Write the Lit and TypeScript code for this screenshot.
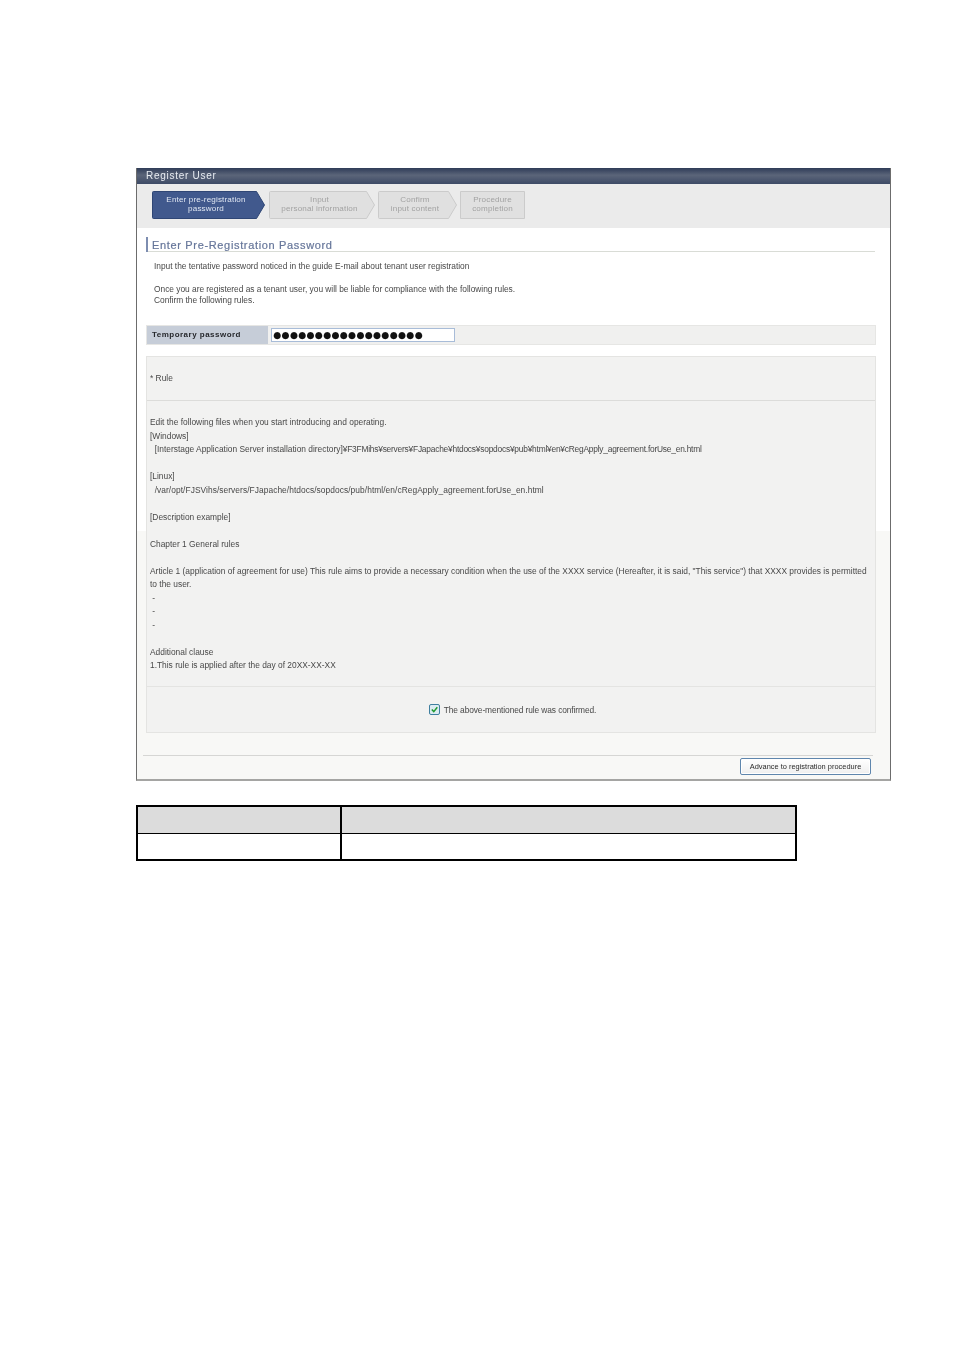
import { LitElement, html, css, svg } from "lit";
import { customElement } from "lit/decorators.js";

const STEPS = [
  { w: 113, a: 8, active: true, l: ["Enter pre-registration", "password"] },
  { w: 106, a: 8, active: false, l: ["Input", "personal information"] },
  { w: 79, a: 8, active: false, l: ["Confirm", "input content"] },
  { w: 65, a: 0, active: false, l: ["Procedure", "completion"] },
];

const WIN_PATH = "¥F3FMihs¥servers¥FJapache¥htdocs¥sopdocs¥pub¥html¥en¥cRegApply_agreement.forUse_en.html";
const LIN_PATH = "/var/opt/FJSVihs/servers/FJapache/htdocs/sopdocs/pub/html/en/cRegApply_agreement.forUse_en.html";

const RULES_A = [
  "Edit the following files when you start introducing and operating.",
  "[Windows]",
];
const RULES_B = [
  "",
  "Chapter 1 General rules",
  "",
  "Article 1 (application of agreement for use) This rule aims to provide a necessary condition when the use of the XXXX service (Hereafter, it is said, \"This service\") that XXXX provides is permitted",
  "to the user.",
  "\u00a0-",
  "\u00a0-",
  "\u00a0-",
  "",
  "Additional clause",
  "1.This rule is applied after the day of 20XX-XX-XX",
];

@customElement("app-root")
export class AppRoot extends LitElement {
  static styles = css`
    :host { display: block; width: 954px; height: 1350px; background: #fff; font-family: "Liberation Sans", Arial, sans-serif; overflow: hidden; }
    .page { padding: 168px 0 0 136px; display: flex; flex-direction: column; align-items: flex-start; }
    .frame { width: 755px; height: 613px; box-sizing: border-box; border: 1px solid #6c6c6c; border-top: 0; border-bottom: 2px solid #a5a5a3;
      background: linear-gradient(#fff 0 363px, #f8f8f6 363px); display: flex; flex-direction: column; filter: blur(0.35px); color: #484848; font-size: 8.4px; }
    .title { height: 16px; background: linear-gradient(#2f3c58, #5b6579 45%, #3d4a66); color: #e8ecf2; font-size: 10px; letter-spacing: .72px; padding-left: 9px; line-height: 16px; }
    .band { height: 44px; background: #ebebeb; box-sizing: border-box; padding: 7px 0 0 15px; display: flex; gap: 3px; }
    .step { display: grid; height: 28px; text-align: center; color: #a2a2a2; line-height: 9px; font-size: 8.1px; letter-spacing: .15px; }
    .step > * { grid-area: 1 / 1; }
    .step.on { color: #dfe6f2; margin-right: 1px; }
    .step .txt { padding-top: 4px; padding-right: 5px; white-space: nowrap; }
    .step.last .txt { padding-right: 0; }
    .heading { margin: 9px 0 0 9px; height: 15px; border-left: 2px solid #7d8db0; box-sizing: border-box; }
    .heading div { padding-left: 4px; height: 14px; width: 723px; border-bottom: 1px solid #d9dcd6; color: #66769a; font-size: 11px; letter-spacing: .66px; line-height: 16px; white-space: nowrap; -webkit-text-stroke: .2px #66769a; }
    .intro { margin: 9px 0 0 17px; line-height: 11.4px; letter-spacing: -.02px; }
    .intro p { margin: 0; height: 11.4px; white-space: nowrap; }
    .pw { margin: 18.5px 0 0 9px; width: 730px; height: 20px; display: flex; background: #f0f0ef; border: 1px solid #e6e6e4; box-sizing: border-box; }
    .pw .lab { width: 121px; background: #c6cdd8; color: #26282c; font-weight: 700; font-size: 8px; letter-spacing: .48px; line-height: 18px; padding-left: 5px; box-sizing: border-box; white-space: nowrap; }
    .pw .in { margin: 2px 0 0 3px; width: 184px; height: 14px; box-sizing: border-box; background: #fff; border: 1px solid #a8bcd8; font-family: "DejaVu Sans", sans-serif; font-size: 9.2px; letter-spacing: .3px; line-height: 11px; color: #111; padding-left: 1px; overflow: hidden; white-space: nowrap; }
    .panel { margin: 10.5px 0 0 9px; width: 730px; box-sizing: border-box; background: #f2f2f1; border: 1px solid #e4e4e2; }
    .rhead { height: 44px; padding: 16.5px 0 0 3px; box-sizing: border-box; border-bottom: 1px solid #dcdcda; line-height: 11px; }
    .rbody { height: 286px; box-sizing: border-box; padding: 15.5px 0 0 3px; border-bottom: 1px solid #e4e4e2; }
    .rbody p { margin: 0; height: 13.5px; line-height: 13.5px; white-space: nowrap; }
    .win { letter-spacing: -.22px; }
    .lin { letter-spacing: .06px; }
    .agree { height: 45px; display: flex; justify-content: center; align-items: center; gap: 4px; padding: 1.5px 0 0 3px; box-sizing: border-box; }
    .agree span { letter-spacing: -.1px; }
    .agree svg { display: block; }
    .foot { margin: 22.5px 0 0 6px; width: 730px; height: 1px; background: #d6d6d4; }
    .btnrow { display: flex; justify-content: flex-end; width: 734px; padding-top: 2px; }
    .btn { width: 131px; height: 17px; box-sizing: border-box; border: 1px solid #5f86ad; border-radius: 2px; background: linear-gradient(#fff, #efefef); color: #2a2a2a; font-size: 7.4px; letter-spacing: .02px; text-align: center; line-height: 15px; white-space: nowrap; box-shadow: inset 0 0 0 1px #fff; }
    .tbl { margin-top: 24px; width: 661px; height: 56px; box-sizing: border-box; border: 2px solid #000; display: grid; grid-template-columns: 202px 2px 1fr; grid-template-rows: 26px 1px 1fr; background: #000; }
    .tbl .h { background: #dcdcdc; }
    .tbl .c { background: #fff; }
  `;

  private step(s: (typeof STEPS)[number]) {
    const r = s.w - s.a - 0.5;
    const p = s.a
      ? `M.5 1.5 Q.5 .5 1.5 .5 H${r} L${s.w - 0.5} 14 L${r} 27.5 H1.5 Q.5 27.5 .5 26.5 Z`
      : `M.5 .5 H${s.w - 0.5} V27.5 H.5 Z`;
    return html`<div class="step ${s.active ? "on" : ""} ${s.a ? "" : "last"}" style="width:${s.w}px">
      <svg width=${s.w} height="28" viewBox="0 0 ${s.w} 28">
        ${svg`<path d=${p} fill=${s.active ? "#41598d" : "#e0e0e0"} stroke=${s.active ? "#2f4675" : "#cbcbcb"} />`}
      </svg>
      <div class="txt">${s.l[0]}<br />${s.l[1]}</div>
    </div>`;
  }

  render() {
    return html`<div class="page">
      <div class="frame">
        <div class="title">Register User</div>
        <div class="band">${STEPS.map((s) => this.step(s))}</div>
        <div class="heading"><div>Enter Pre-Registration Password</div></div>
        <div class="intro">
          <p>Input the tentative password noticed in the guide E-mail about tenant user registration</p>
          <p>&nbsp;</p>
          <p>Once you are registered as a tenant user, you will be liable for compliance with the following rules.</p>
          <p>Confirm the following rules.</p>
        </div>
        <div class="pw">
          <div class="lab">Temporary password</div>
          <div class="in">${"●".repeat(18)}</div>
        </div>
        <div class="panel">
          <div class="rhead">* Rule</div>
          <div class="rbody">
            ${RULES_A.map((t) => html`<p>${t}</p>`)}
            <p>&nbsp;&nbsp;[Interstage Application Server installation directory]<span class="win">${WIN_PATH}</span></p>
            <p>&nbsp;</p>
            <p>[Linux]</p>
            <p>&nbsp;&nbsp;<span class="lin">${LIN_PATH}</span></p>
            <p>&nbsp;</p>
            <p>[Description example]</p>
            ${RULES_B.map((t) => html`<p>${t || "\u00a0"}</p>`)}
          </div>
          <div class="agree">
            <svg width="11" height="11" viewBox="0 0 11 11">
              <rect x=".5" y=".5" width="10" height="10" rx="1.5" fill="#dcebf2" stroke="#3f7f9f" />
              <path d="M2.8 5.4 L4.8 7.6 L8.3 3.2" fill="none" stroke="#1f9a2f" stroke-width="1.5" />
            </svg>
            <span>The above-mentioned rule was confirmed.</span>
          </div>
        </div>
        <div class="foot"></div>
        <div class="btnrow"><div class="btn">Advance to registration procedure</div></div>
      </div>
      <div class="tbl">
        <div class="h"></div><div></div><div class="h"></div>
        <div></div><div></div><div></div>
        <div class="c"></div><div></div><div class="c"></div>
      </div>
    </div>`;
  }
}
